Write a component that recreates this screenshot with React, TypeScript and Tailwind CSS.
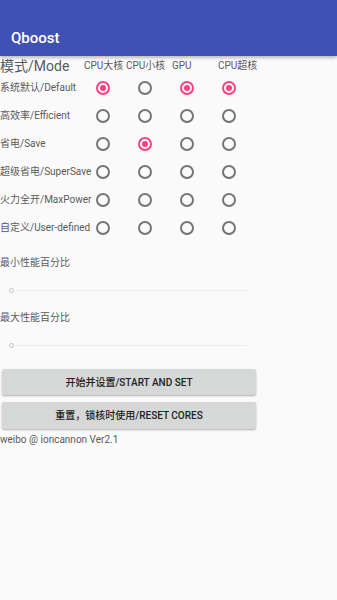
import React from "react";

const cols = ["CPU大核", "CPU小核", "GPU", "CPU超核"];

const modes: { label: string; checked: boolean[] }[] = [
  { label: "系统默认/Default", checked: [true, false, true, true] },
  { label: "高效率/Efficient", checked: [false, false, false, false] },
  { label: "省电/Save", checked: [false, true, false, false] },
  { label: "超级省电/SuperSave", checked: [false, false, false, false] },
  { label: "火力全开/MaxPower", checked: [false, false, false, false] },
  { label: "自定义/User-defined", checked: [false, false, false, false] },
];

function Radio({ on }: { on: boolean }) {
  return (
    <div
      className={`w-[14px] h-[14px] rounded-full border-2 flex items-center justify-center ${
        on ? "border-[#ff4081]" : "border-[#757575]"
      }`}
    >
      {on && <div className="w-[6px] h-[6px] rounded-full bg-[#ff4081]" />}
    </div>
  );
}

function Slider() {
  return (
    <div className="h-[10px] flex items-center pl-[9px] pr-[90px]">
      <div className="w-[5px] h-[5px] rounded-full border border-[#c4c4c4] shrink-0" />
      <div className="ml-[2px] flex-1 h-px bg-[#ececec]" />
    </div>
  );
}

export default function App() {
  return (
    <div
      className="w-[337px] h-[600px] bg-[#fafafa] overflow-hidden"
      style={{ fontFamily: 'Roboto, "Noto Sans CJK SC", sans-serif' }}
    >
      <div className="h-14 bg-[#3f51b5] shadow-[0_2px_3px_rgba(0,0,0,0.25)] flex items-end pb-[10px] pl-[11px]">
        <span className="text-white text-[15px] font-medium leading-none">Qboost</span>
      </div>

      <div className="h-[18px] pt-[2px] flex items-center text-[#5a5a5a]">
        <span className="text-[14px] w-[84px] leading-none">模式/Mode</span>
        <span className="text-[10px] w-[42px] leading-none">{cols[0]}</span>
        <span className="text-[10px] w-[46px] leading-none">{cols[1]}</span>
        <span className="text-[10px] w-[46px] leading-none">{cols[2]}</span>
        <span className="text-[10px] leading-none">{cols[3]}</span>
      </div>

      {modes.map((m) => (
        <div key={m.label} className="h-[28px] flex items-center">
          <span className="w-[82px] text-[10px] text-[#5a5a5a] whitespace-nowrap leading-none">
            {m.label}
          </span>
          {m.checked.map((c, i) => (
            <div key={i} className="w-[42px] flex justify-center">
              <Radio on={c} />
            </div>
          ))}
        </div>
      ))}

      <div className="mt-[14px] text-[10px] text-[#5a5a5a] leading-[14px]">最小性能百分比</div>
      <div className="mt-[15px]">
        <Slider />
      </div>
      <div className="mt-[16px] text-[10px] text-[#5a5a5a] leading-[14px]">最大性能百分比</div>
      <div className="mt-[15px]">
        <Slider />
      </div>

      <div className="mt-[19px] pl-[2px] w-[256px] flex flex-col gap-[7px]">
        <button className="h-[26px] bg-[#d6d7d7] rounded-[2px] shadow-[0_1px_2px_rgba(0,0,0,0.3)] text-[10px] font-medium text-[#222]">
          开始并设置/START AND SET
        </button>
        <button className="h-[27px] bg-[#d6d7d7] rounded-[2px] shadow-[0_1px_2px_rgba(0,0,0,0.3)] text-[10px] font-medium text-[#222]">
          重置，锁核时使用/RESET CORES
        </button>
      </div>
      <div className="mt-[4px] text-[10px] text-[#5a5a5a] leading-[14px]">weibo @ ioncannon Ver2.1</div>
    </div>
  );
}
